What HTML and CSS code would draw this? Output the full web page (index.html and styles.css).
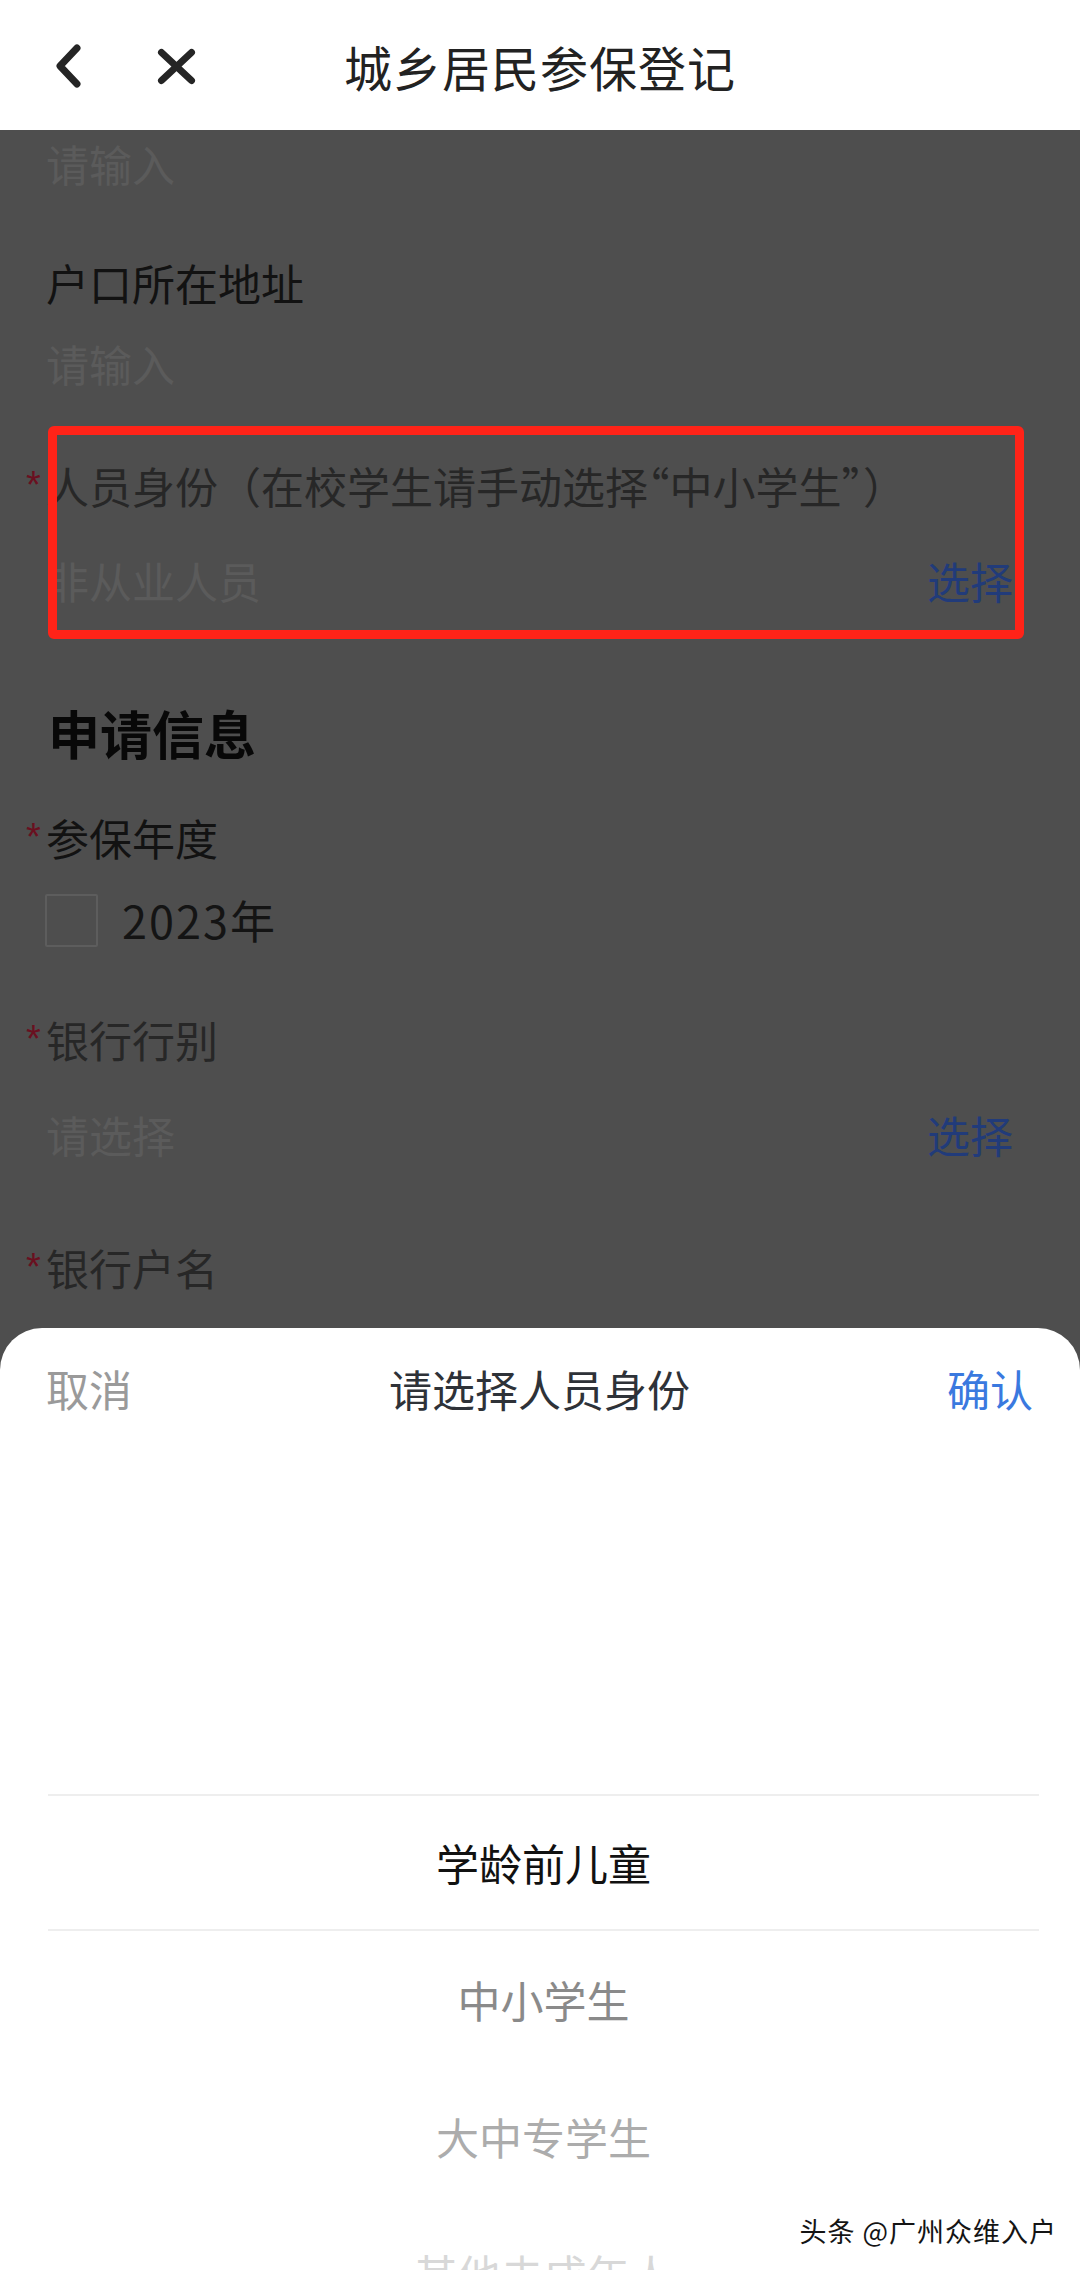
FILE: index.html
```html
<!DOCTYPE html>
<html lang="zh-CN">
<head>
<meta charset="utf-8">
<title>城乡居民参保登记</title>
<link rel="stylesheet" href="styles.css">
</head>
<body>
<div class="screen">
  <header class="topbar">
    <div class="nav-icons">
      <svg class="nav-svg" width="160" height="60" viewBox="0 0 160 60" aria-hidden="true">
        <polyline points="29,12 12,30 29,48" fill="none" stroke="#252525" stroke-width="7" stroke-linecap="round" stroke-linejoin="round"/>
        <line x1="113.5" y1="16.5" x2="143.5" y2="44.5" stroke="#252525" stroke-width="7" stroke-linecap="round"/>
        <line x1="143.5" y1="16.5" x2="113.5" y2="44.5" stroke="#252525" stroke-width="7" stroke-linecap="round"/>
      </svg>
    </div>
    <h1 class="title">城乡居民参保登记</h1>
    <div class="nav-spacer"></div>
  </header>

  <main class="form">
    <div class="value placeholder first">请输入</div>

    <div class="field field-text">
      <div class="label">户口所在地址</div>
      <div class="value placeholder">请输入</div>
    </div>

    <div class="field field-marked">
      <div class="label req dim">人员身份（在校学生请手动选择<span class="hw">“</span>中小学生<span class="hw">”）</span></div>
      <div class="value-row">
        <span class="placeholder">非从业人员</span>
        <span class="pick">选择</span>
      </div>
      <div class="mark-box"></div>
    </div>

    <h2 class="section">申请信息</h2>

    <div class="field field-check">
      <div class="label req">参保年度</div>
      <div class="check-row"><span class="checkbox"></span><span class="check-text">2023年</span></div>
    </div>

    <div class="field">
      <div class="label req dim">银行行别</div>
      <div class="value-row">
        <span class="placeholder">请选择</span>
        <span class="pick">选择</span>
      </div>
    </div>

    <div class="field field-last">
      <div class="label req dim">银行户名</div>
    </div>
  </main>

  <section class="sheet">
    <div class="sheet-head">
      <span class="cancel">取消</span>
      <span class="sheet-title">请选择人员身份</span>
      <span class="confirm">确认</span>
    </div>
    <ul class="picker">
      <li class="opt selected">学龄前儿童</li>
      <li class="opt o2">中小学生</li>
      <li class="opt o3">大中专学生</li>
      <li class="opt o4">其他未成年人</li>
    </ul>
  </section>

  <div class="watermark">头条 @广州众维入户</div>
</div>
</body>
</html>
```

FILE: styles.css
```css
* { box-sizing: border-box; }
html, body {
  margin: 0;
  padding: 0;
}
body {
  font-family: "Noto Sans CJK SC", "Noto Sans", "Liberation Sans", sans-serif;
  background: #4e4e4e;
}
.screen {
  position: relative;
  width: 1080px;
  height: 2270px;
  overflow: hidden;
  background: #4e4e4e;
}

/* top bar */
.topbar {
  height: 130px;
  background: #ffffff;
  display: grid;
  grid-template-columns: 1fr auto 1fr;
  align-items: center;
}
.nav-icons {
  padding-left: 48px;
  display: flex;
  align-items: center;
  padding-top: 1px;
}
.nav-svg { display: block; }
.title {
  margin: 0;
  padding-top: 2px;
  font-size: 48px;
  font-weight: 400;
  letter-spacing: 1px;
  color: #222;
  line-height: 60px;
}

/* form */
.form {
  padding: 3px 67px 0 46px;
  display: flex;
  flex-direction: column;
  font-size: 43px;
}
.label, .value, .value-row, .check-row {
  line-height: 60px;
  height: 60px;
}
.label { color: #121212; position: relative; }
.label.dim { color: #272727; }
.hw { font-feature-settings: "halt" 1; }
.req::before {
  content: "*";
  position: absolute;
  left: -20px;
  top: 0;
  font-family: "Liberation Sans", sans-serif;
  font-size: 38px;
  color: #6a1020;
}
.placeholder { color: #5b5b5b; }
.value-row {
  display: flex;
  justify-content: space-between;
}
.pick { color: #213b7a; }

.field {
  display: flex;
  flex-direction: column;
  gap: 35px;
  margin-top: 59px;
}
.field-text { gap: 21px; }
.field-marked { position: relative; margin-top: 62px; }
.field-check { gap: 23px; margin-top: 39px; }
.field-last { margin-top: 73px; }

.mark-box {
  position: absolute;
  top: -29px;
  bottom: -29px;
  left: 2px;
  right: -11px;
  border: 9px solid #ff2318;
  border-radius: 6px;
}

.section {
  margin: 88px 0 0 2px;
  font-size: 52px;
  font-weight: 700;
  line-height: 70px;
  color: #080808;
}

.check-row {
  display: flex;
  align-items: center;
  gap: 24px;
  margin-left: -1px;
}
.checkbox {
  width: 53px;
  height: 53px;
  border: 2px solid #5d5d5d;
  border-radius: 2px;
}
.check-text {
  color: #141414;
  font-size: 45px;
  letter-spacing: 2px;
}

/* bottom sheet */
.sheet {
  position: absolute;
  left: 0;
  right: 0;
  bottom: 0;
  height: 942px;
  background: #ffffff;
  border-radius: 42px 42px 0 0;
  font-size: 43px;
}
.sheet-head {
  height: 120px;
  display: flex;
  align-items: center;
  justify-content: space-between;
  padding: 0 47px 0 46px;
  line-height: 60px;
}
.cancel { color: #9a9a9a; }
.sheet-title { color: #2e3238; }
.confirm { color: #3a79df; }

.picker {
  list-style: none;
  margin: 0;
  padding: 346px 41px 0 48px;
}
.opt {
  height: 137px;
  line-height: 137px;
  text-align: center;
  color: #888;
}
.opt.selected {
  color: #111;
  border-top: 2px solid #eeeeee;
  border-bottom: 2px solid #eeeeee;
  line-height: 133px;
}
.opt.o2 { color: #8a8a8a; }
.opt.o3 { color: #acacac; }
.opt.o4 { color: #d8d8d8; }

.watermark {
  position: absolute;
  right: 23px;
  bottom: 24px;
  font-size: 27px;
  line-height: 30px;
  letter-spacing: 1px;
  color: #141414;
  text-shadow: 1px 1px 0 #ffffff, -1px 0 0 rgba(255,255,255,0.8);
}
```
